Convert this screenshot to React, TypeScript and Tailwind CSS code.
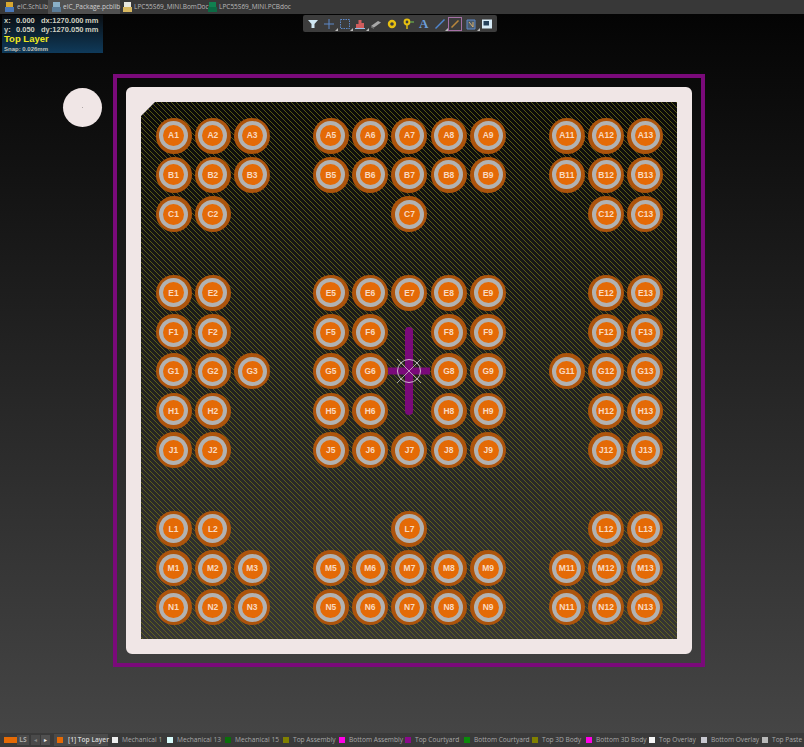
import React from "react";

const rows: [string, number[]][] = [
  ["A", [1, 2, 3, 5, 6, 7, 8, 9, 11, 12, 13]],
  ["B", [1, 2, 3, 5, 6, 7, 8, 9, 11, 12, 13]],
  ["C", [1, 2, 7, 12, 13]],
  ["D", []],
  ["E", [1, 2, 5, 6, 7, 8, 9, 12, 13]],
  ["F", [1, 2, 5, 6, 8, 9, 12, 13]],
  ["G", [1, 2, 3, 5, 6, 8, 9, 11, 12, 13]],
  ["H", [1, 2, 5, 6, 8, 9, 12, 13]],
  ["J", [1, 2, 5, 6, 7, 8, 9, 12, 13]],
  ["K", []],
  ["L", [1, 2, 7, 12, 13]],
  ["M", [1, 2, 3, 5, 6, 7, 8, 9, 11, 12, 13]],
  ["N", [1, 2, 3, 5, 6, 7, 8, 9, 11, 12, 13]],
];

const columns = [1, 2, 3, 4, 5, 6, 7, 8, 9, 10, 11, 12, 13];

const layers = [
  { name: "Mechanical 1", color: "bg-[#eeeeee]", width: "w-[55px]" },
  { name: "Mechanical 13", color: "bg-[#d8fbfb]", width: "w-[58px]" },
  { name: "Mechanical 15", color: "bg-[#0a6e0a]", width: "w-[58px]" },
  { name: "Top Assembly", color: "bg-[#808000]", width: "w-[56px]" },
  { name: "Bottom Assembly", color: "bg-[#ff00e6]", width: "w-[66px]" },
  { name: "Top Courtyard", color: "bg-[#8a0a8a]", width: "w-[59px]" },
  { name: "Bottom Courtyard", color: "bg-[#0a8a0a]", width: "w-[68px]" },
  { name: "Top 3D Body", color: "bg-[#808000]", width: "w-[54px]" },
  { name: "Bottom 3D Body", color: "bg-[#ff00e6]", width: "w-[63px]" },
  { name: "Top Overlay", color: "bg-[#f5f5f5]", width: "w-[52px]" },
  { name: "Bottom Overlay", color: "bg-[#c8c8d0]", width: "w-[61px]" },
  { name: "Top Paste", color: "bg-[#b8b8b8]", width: "w-[38px]" },
];

function Pad({ label }: { label: string }) {
  return (
    <div className="relative flex h-[36px] w-[36px] items-center justify-center rounded-full bg-[#ad540c]">
      <div className="flex h-[29px] w-[29px] items-center justify-center rounded-full bg-[#b2b2b2]">
        <div className="flex h-[21px] w-[21px] items-center justify-center rounded-full bg-[#e46a06] font-['Liberation_Sans',sans-serif] text-[8.5px] font-bold leading-none text-[#f9d9c0]">
          {label}
        </div>
      </div>
    </div>
  );
}

function ToolIcon({ children, corner }: { children: React.ReactNode; corner?: boolean }) {
  return (
    <div className="relative flex h-[17px] w-[14px] items-center justify-center">
      <svg width="12" height="12" viewBox="0 0 12 12">
        {children}
      </svg>
      {corner && <div className="absolute bottom-[1px] right-[-2px] h-0 w-0 border-b-[3px] border-l-[3px] border-b-[#bbb] border-l-transparent" />}
    </div>
  );
}

function Toolbar() {
  return (
    <div className="absolute left-[303px] top-[1px] flex h-[17px] w-[194px] items-center gap-[2px] rounded-[2px] bg-[#3c3c3c] px-[3px]">
      <ToolIcon>
        <path d="M1 2h10L7.5 6V10h-3V6z" fill="#cfe6f2" />
      </ToolIcon>
      <ToolIcon corner>
        <path d="M6 1v10M1 6h10" stroke="#5d88c8" strokeWidth="1" />
      </ToolIcon>
      <ToolIcon corner>
        <rect x="1.5" y="1.5" width="9" height="9" fill="none" stroke="#5d88c8" strokeDasharray="1.5 1" />
      </ToolIcon>
      <ToolIcon corner>
        <path d="M2 10V6h2.5v4zM4.5 10V2h3v8zM7.5 10V5H10v5z" fill="#d05c5c" />
        <path d="M1 10.5h10" stroke="#9ac0e8" />
      </ToolIcon>
      <ToolIcon>
        <path d="M1 8l7-5 3 1.5-7 5z" fill="#a8a8a8" />
        <path d="M1 8l3 1.5v1.5L1 9.5z" fill="#707070" />
      </ToolIcon>
      <ToolIcon>
        <circle cx="6" cy="6" r="3" fill="none" stroke="#e8c010" strokeWidth="2.4" />
      </ToolIcon>
      <ToolIcon>
        <circle cx="5" cy="4" r="2.4" fill="none" stroke="#e8c010" strokeWidth="2" />
        <path d="M5 7v4" stroke="#e8c010" strokeWidth="1.4" />
        <path d="M8 4h4" stroke="#6cb04c" strokeWidth="1.2" />
      </ToolIcon>
      <div className="flex h-[17px] w-[14px] items-center justify-center font-['Liberation_Serif',serif] text-[13px] font-bold leading-none text-[#6d9ed8]">A</div>
      <ToolIcon corner>
        <path d="M1.5 10.5l9-9" stroke="#4f86d0" strokeWidth="1.4" />
      </ToolIcon>
      <div className="relative flex h-[14px] w-[14px] items-center justify-center border border-[#a56fa5]">
        <svg width="10" height="10" viewBox="0 0 10 10">
          <path d="M1.5 8.5l7-7" stroke="#b8863c" strokeWidth="1.6" />
        </svg>
      </div>
      <ToolIcon corner>
        <path d="M2 2h8v9H2z" fill="#4a5a6a" stroke="#5d88c8" />
        <path d="M4 4l4 5M8 4v5" stroke="#d8b070" />
      </ToolIcon>
      <ToolIcon>
        <rect x="1" y="1.5" width="10" height="9" fill="#d8ecf8" />
        <rect x="2.5" y="3" width="5.5" height="4.5" fill="#26425c" />
      </ToolIcon>
    </div>
  );
}

function TabIcon({ top, bottom }: { top: string; bottom: string }) {
  return (
    <svg width="9" height="10" viewBox="0 0 9 10" className="shrink-0">
      <rect x="1" y="0" width="7" height="5" fill={top} />
      <rect x="0" y="5" width="9" height="5" fill={bottom} />
    </svg>
  );
}

export default function App() {
  return (
    <div className="flex h-[747px] w-[804px] flex-col overflow-hidden bg-[#3a3a3a] font-['Open_Sans','Noto_Sans',sans-serif]">
      {/* document tabs */}
      <div className="flex h-[14px] shrink-0 items-center whitespace-nowrap bg-[#383838] text-[6.5px] leading-none text-[#b8b8b8]">
        <div className="flex h-full w-[48px] items-center gap-[3px] pl-[5px]">
          <TabIcon top="#d8a830" bottom="#4a78b8" />
          <span>eIC.SchLib</span>
        </div>
        <div className="flex h-full w-[72px] items-center gap-[2px] bg-[#505050] pl-[4px] text-[#d0d0d0]">
          <TabIcon top="#8ab0c8" bottom="#5a7c98" />
          <span>eIC_Package.pcblib</span>
        </div>
        <div className="flex h-full w-[88px] items-center gap-[2px] pl-[3px]">
          <TabIcon top="#e8e8e0" bottom="#d8b860" />
          <span>LPC55S69_MINI.BomDoc</span>
        </div>
        <div className="flex h-full items-center gap-[2px]">
          <TabIcon top="#108050" bottom="#0c6a44" />
          <span>LPC55S69_MINI.PCBdoc</span>
        </div>
      </div>

      {/* pcb canvas */}
      <div className="relative min-h-0 flex-1 bg-[linear-gradient(180deg,#040404_0%,#454545_100%)]">
        <Toolbar />

        {/* cursor readout */}
        <div className="absolute left-[2px] top-[1px] flex h-[38px] w-[101px] flex-col whitespace-nowrap bg-[linear-gradient(180deg,#0a0e12_0%,#0f3a5a_100%)] pl-[2px] pt-[1px] font-['Liberation_Sans',sans-serif] leading-none">
          <div className="flex h-[9px] items-center text-[7.5px] font-bold text-[#d0d0c0]">
            <span className="w-[12px]">x:</span>
            <span className="w-[25px]">0.000</span>
            <span className="w-[44px]">dx:1270.000</span>
            <span>mm</span>
          </div>
          <div className="flex h-[9px] items-center text-[7.5px] font-bold text-[#d0d0c0]">
            <span className="w-[12px]">y:</span>
            <span className="w-[25px]">0.050</span>
            <span className="w-[44px]">dy:1270.050</span>
            <span>mm</span>
          </div>
          <div className="flex h-[10px] items-center text-[9.5px] font-bold text-[#f0e820]">Top Layer</div>
          <div className="mt-[2px] text-[6px] font-bold text-[#c0c0b8]">Snap: 0.026mm</div>
        </div>

        {/* mounting hole */}
        <div className="absolute left-[63px] top-[74px] flex h-[39px] w-[39px] items-center justify-center rounded-full bg-[#f0e6e6]">
          <div className="h-px w-px bg-[#b0a8a8]" />
        </div>

        {/* keepout + board */}
        <div className="ml-[113px] mt-[60px] h-[593px] w-[592px] border-[4px] border-[#7a0a7a] p-[9px]">
          <div className="rounded-[6px] border-[15px] border-[#f0e6e6]">
            <div className="relative grid h-[537px] w-[536px] grid-cols-[repeat(13,39.33px)] grid-rows-[repeat(13,39.33px)] place-content-center place-items-center pl-[1px] pt-[2px]">
              {/* copper hatch and chamfered corner */}
              <svg className="absolute left-0 top-0" width="536" height="537">
                <defs>
                  <pattern id="hatch" width="5" height="5" patternUnits="userSpaceOnUse">
                    <rect width="5" height="5" fill="#000000" fillOpacity="0.12" />
                    <path d="M-1 -1L6 6M-1 4L1 6M4 -1L6 1" stroke="#6c6c14" strokeOpacity="0.8" strokeWidth="1" />
                  </pattern>
                </defs>
                <rect width="536" height="537" fill="url(#hatch)" />
                <path d="M0 0h14L0 14z" fill="#f0e6e6" />
              </svg>
              {rows.map(([row, cols]) =>
                columns.map((col) =>
                  cols.includes(col) ? <Pad key={row + col} label={row + col} /> : <div key={row + col} />
                )
              )}
              {/* origin marker */}
              <svg className="absolute left-[246px] top-[225px]" width="44" height="88" viewBox="0 0 44 88">
                <path d="M1 44h42" stroke="#7a0a7a" strokeWidth="7" />
                <path d="M22 4v80" stroke="#7a0a7a" strokeWidth="8" strokeLinecap="round" />
                <circle cx="22" cy="44" r="11.5" fill="none" stroke="#e8e0e8" strokeWidth="0.8" />
                <path d="M10 32l24 24M34 32L10 56" stroke="#d8d8d8" strokeWidth="0.7" />
              </svg>
            </div>
          </div>
        </div>
      </div>

      {/* layer tabs */}
      <div className="flex h-[14px] shrink-0 items-center whitespace-nowrap bg-[#3a3a3a] text-[6.6px] leading-none text-[#a8a8a8]">
        <div className="ml-[4px] h-[6px] w-[13px] bg-[#e46a06]" />
        <div className="flex h-[10px] w-[12px] items-center justify-center bg-[#4a4a4a] font-bold">LS</div>
        <div className="ml-[2px] flex h-[10px] w-[9px] items-center justify-center bg-[#4a4a4a] text-[6px] text-[#888]">◂</div>
        <div className="ml-px flex h-[10px] w-[9px] items-center justify-center bg-[#505050] text-[6px] text-[#eee]">▸</div>
        <div className="ml-[4px] flex h-[12px] w-[54px] items-center gap-[5px] bg-[#4a4a4a] pl-[3px] font-semibold text-[#d8d8d8]">
          <div className="h-[6px] w-[6px] shrink-0 bg-[#e46a06]" />
          <span>[1] Top Layer</span>
        </div>
        {layers.map((layer) => (
          <div key={layer.name} className={`flex h-[12px] shrink-0 items-center gap-[4px] pl-[4px] ${layer.width}`}>
            <div className={`h-[6px] w-[6px] shrink-0 ${layer.color}`} />
            <span>{layer.name}</span>
          </div>
        ))}
      </div>
    </div>
  );
}
